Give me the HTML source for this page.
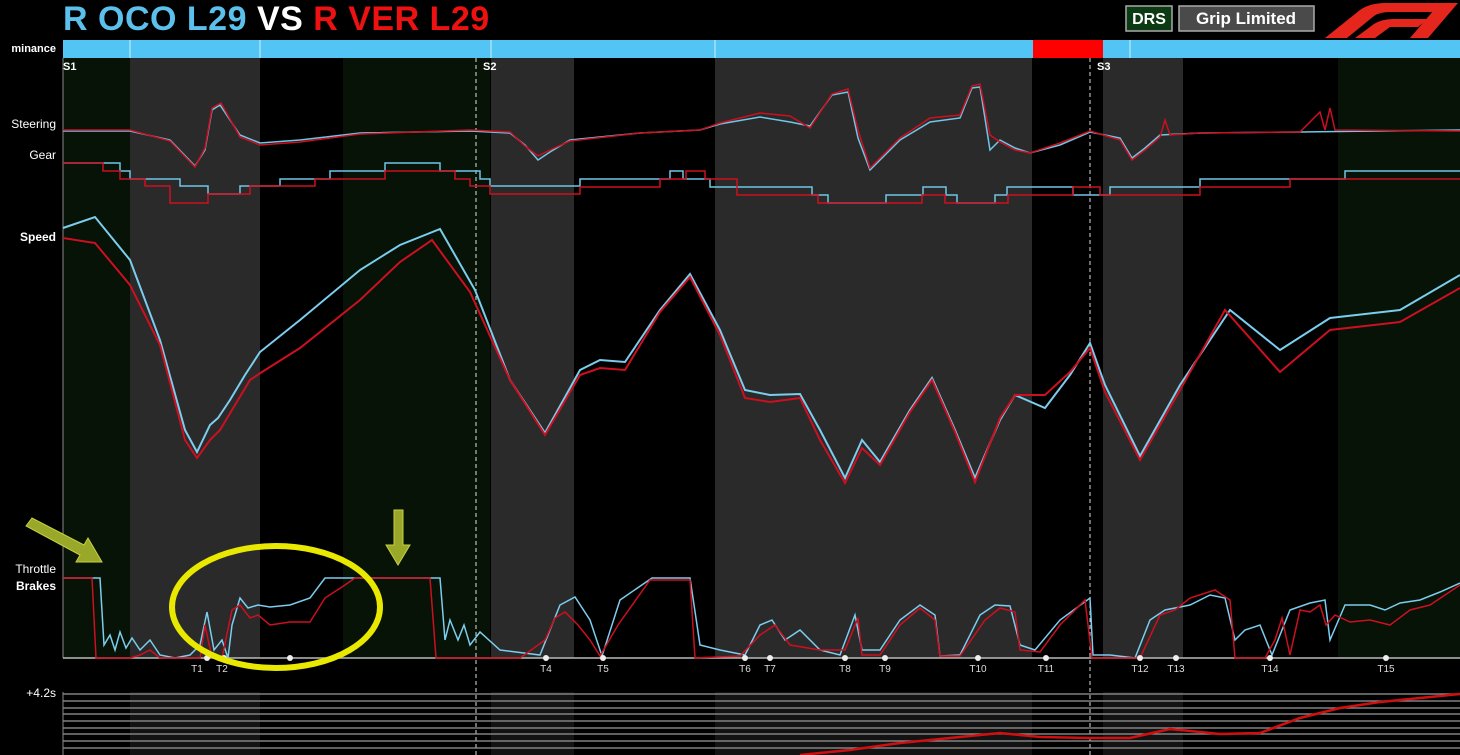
<!DOCTYPE html>
<html><head><meta charset="utf-8"><style>
html,body{margin:0;padding:0;background:#000;}
body{width:1460px;height:755px;overflow:hidden;position:relative;font-family:"Liberation Sans",sans-serif;}
svg{position:absolute;left:0;top:0}
</style></head><body>
<svg width="1460" height="755" viewBox="0 0 1460 755" xmlns="http://www.w3.org/2000/svg">
<rect width="1460" height="755" fill="#000"/>
<g>
<rect x="63" y="58" width="67" height="600" fill="#061306"/>
<rect x="130" y="58" width="130" height="600" fill="#2a2a2a"/>
<rect x="343" y="58" width="147" height="600" fill="#061306"/>
<rect x="491" y="58" width="83" height="600" fill="#2a2a2a"/>
<rect x="715" y="58" width="317" height="600" fill="#2a2a2a"/>
<rect x="1103" y="58" width="80" height="600" fill="#2a2a2a"/>
<rect x="1338" y="58" width="122" height="600" fill="#061306"/>
</g>
<g opacity="0.45">
<rect x="130" y="692" width="130" height="63" fill="#2a2a2a"/>
<rect x="491" y="692" width="83" height="63" fill="#2a2a2a"/>
<rect x="715" y="692" width="317" height="63" fill="#2a2a2a"/>
<rect x="1103" y="692" width="80" height="63" fill="#2a2a2a"/>
</g>
<text x="63" y="30" font-size="34" font-weight="bold" fill="#5bc0eb" letter-spacing="0.5">R OCO L29 <tspan fill="#fff">VS</tspan> <tspan fill="#ee1111">R VER L29</tspan></text>
<rect x="1126" y="6" width="46" height="25" fill="#0c3a12" stroke="#aaa" stroke-width="1.5"/>
<text x="1149" y="24" font-size="16" font-weight="bold" fill="#fff" text-anchor="middle">DRS</text>
<rect x="1179" y="6" width="135" height="25" fill="#4a4a4a" stroke="#aaa" stroke-width="1.5"/>
<text x="1246" y="24" font-size="17" font-weight="bold" fill="#fff" text-anchor="middle">Grip Limited</text>
<g fill="#e5261c">
<path d="M1325 38 L1347 38 L1374 16 Q1380 12 1390 12 L1440 12 L1448 3 L1385 3 Q1370 3 1360 10 Z"/>
<path d="M1355 38 L1375 38 L1390 27 L1418 27 L1428 19 L1393 19 Q1382 19 1374 24 Z"/>
<path d="M1410 38 L1428 38 L1458 3 L1440 3 Z"/>
</g>
<rect x="63" y="40" width="1397" height="18" fill="#52c5f4"/>
<rect x="1033" y="40" width="70" height="18" fill="#ff0000"/>
<g stroke="#cfefff" stroke-width="1"><line x1="130" y1="40" x2="130" y2="58"/><line x1="260" y1="40" x2="260" y2="58"/><line x1="491" y1="40" x2="491" y2="58"/><line x1="715" y1="40" x2="715" y2="58"/><line x1="1130" y1="40" x2="1130" y2="58"/></g>
<text x="56" y="52" font-size="11" font-weight="bold" fill="#fff" text-anchor="end">minance</text>
<g font-size="12" fill="#fff" text-anchor="end">
<text x="56" y="128">Steering</text>
<text x="56" y="159">Gear</text>
<text x="56" y="241" font-weight="bold">Speed</text>
<text x="56" y="573">Throttle</text>
<text x="56" y="590" font-weight="bold">Brakes</text>
<text x="56" y="697">+4.2s</text>
</g>
<g font-size="11" font-weight="bold" fill="#fff"><text x="63" y="70">S1</text><text x="483" y="70">S2</text><text x="1097" y="70">S3</text></g>
<line x1="63" y1="58" x2="63" y2="658" stroke="#888" stroke-width="1"/>
<line x1="63" y1="658" x2="1460" y2="658" stroke="#bbb" stroke-width="1.5"/>
<g stroke="#ddd" stroke-width="1" stroke-dasharray="4,3"><line x1="476" y1="58" x2="476" y2="755"/><line x1="1090" y1="58" x2="1090" y2="755"/></g>
<g stroke="#999" stroke-width="1.2">
<line x1="63" y1="694" x2="1460" y2="694"/><line x1="63" y1="701" x2="1460" y2="701"/><line x1="63" y1="708" x2="1460" y2="708"/><line x1="63" y1="714" x2="1460" y2="714"/><line x1="63" y1="721" x2="1460" y2="721"/><line x1="63" y1="728" x2="1460" y2="728"/><line x1="63" y1="734" x2="1460" y2="734"/><line x1="63" y1="741" x2="1460" y2="741"/><line x1="63" y1="748" x2="1460" y2="748"/>
</g>
<line x1="63" y1="692" x2="63" y2="755" stroke="#888"/>
<polyline fill="none" stroke="#d01010" stroke-width="2.5" points="800,755 850,750 900,743 960,737 1000,733 1040,737 1090,738 1130,738 1170,729 1220,734 1260,733 1300,718 1340,708 1380,702 1420,698 1460,694"/>
<polyline fill="none" stroke="#6fc6e8" stroke-width="1.5" points="63,131 130,131 170,140 195,166 205,150 212,110 220,105 240,135 260,143 300,140 360,133 470,131 510,133 525,145 538,160 550,152 570,140 640,133 700,130 720,124 760,117 790,122 810,126 832,95 848,92 858,138 870,170 900,140 930,122 960,118 972,88 980,87 990,150 1000,140 1015,148 1030,153 1060,145 1090,132 1120,138 1132,158 1145,148 1160,135 1200,133 1300,132 1460,130"/>
<polyline fill="none" stroke="#cc1020" stroke-width="1.5" points="63,130 130,130 170,141 195,167 205,148 212,108 221,103 240,137 260,145 300,142 360,134 470,130 510,132 525,146 538,156 550,150 570,141 640,133 700,130 720,123 760,113 790,116 810,128 832,94 848,89 858,130 870,168 900,138 930,118 960,115 972,86 980,84 990,135 1000,142 1015,150 1030,153 1060,143 1090,131 1120,140 1132,160 1145,150 1160,137 1165,120 1170,135 1200,133 1300,132 1320,112 1325,130 1330,108 1335,130 1460,131"/>
<polyline fill="none" stroke="#6fc6e8" stroke-width="1.5" points="63,163 120,163 120,171 130,171 130,179 180,179 180,186 208,186 208,194 240,194 240,186 280,186 280,179 330,179 330,171 385,171 385,163 440,163 440,171 480,171 480,179 490,179 490,186 580,186 580,179 670,179 670,171 683,171 683,179 710,179 710,187 812,187 812,195 828,195 828,203 886,203 886,195 923,195 923,187 946,187 946,195 957,195 957,203 995,203 995,195 1007,195 1007,187 1073,187 1073,195 1110,195 1110,187 1200,187 1200,179 1345,179 1345,171 1460,171"/>
<polyline fill="none" stroke="#cc1020" stroke-width="1.5" points="63,163 103,163 103,171 120,171 120,179 145,179 145,186 170,186 170,203 208,203 208,194 250,194 250,186 315,186 315,179 385,179 385,171 455,171 455,179 470,179 470,186 490,186 490,194 580,194 580,187 660,187 660,179 686,179 686,171 705,171 705,179 737,179 737,195 818,195 818,203 922,203 922,195 945,195 945,203 1008,203 1008,195 1073,195 1073,187 1100,187 1100,195 1200,195 1200,187 1290,187 1290,179 1460,179"/>
<polyline fill="none" stroke="#7ccdee" stroke-width="2" points="63,228 95,217 130,260 160,340 185,430 197,452 210,425 218,418 230,400 245,375 260,352 300,320 360,270 400,245 440,229 475,290 510,380 545,433 580,370 600,360 625,362 660,310 690,274 720,330 745,390 770,395 800,394 820,430 845,478 862,440 880,462 910,410 932,378 955,430 975,478 1000,420 1015,395 1045,408 1070,375 1090,343 1105,385 1140,456 1180,385 1230,310 1280,350 1330,318 1400,310 1460,275"/>
<polyline fill="none" stroke="#cc1020" stroke-width="2" points="63,238 95,243 130,285 160,345 185,440 197,458 210,440 220,430 232,410 250,380 262,372 300,348 360,300 400,262 432,240 470,292 510,380 545,435 580,375 600,368 625,370 660,312 690,277 720,335 745,398 770,402 800,398 820,440 845,483 862,448 880,465 910,412 932,380 955,432 975,482 1000,418 1015,395 1045,395 1070,372 1090,348 1105,392 1140,460 1180,390 1225,310 1280,372 1330,330 1400,322 1460,288"/>
<polyline fill="none" stroke="#7ccdee" stroke-width="1.5" points="63,578 100,578 104,645 110,635 115,650 120,632 126,648 132,638 140,650 150,640 160,655 175,658 190,655 200,645 207,612 214,650 222,640 228,658 232,625 240,598 248,608 258,605 270,607 290,605 310,598 325,578 440,578 445,640 450,620 458,640 464,625 470,645 480,632 500,650 540,655 560,605 575,597 590,620 602,656 620,600 652,578 690,578 700,645 720,650 745,655 760,625 772,620 785,640 800,630 820,650 840,655 855,615 862,650 880,650 900,620 920,605 935,615 940,656 960,655 980,615 995,605 1010,606 1020,645 1035,650 1060,620 1090,598 1093,655 1110,655 1135,658 1150,620 1165,610 1190,605 1210,595 1225,598 1235,640 1245,630 1260,625 1272,655 1290,610 1310,603 1325,600 1330,640 1345,605 1370,605 1385,610 1400,603 1420,600 1440,592 1460,583"/>
<polyline fill="none" stroke="#cc1020" stroke-width="1.5" points="63,578 92,578 96,658 130,658 140,655 150,650 160,658 200,658 205,625 212,658 222,658 232,610 240,605 250,618 258,615 270,625 290,622 310,622 325,598 345,585 355,578 430,578 436,658 470,658 520,658 545,640 555,618 565,612 578,625 590,640 600,656 618,625 650,580 690,580 695,658 740,656 760,635 775,625 790,645 820,650 845,650 858,618 862,655 880,655 900,625 920,608 935,620 940,656 960,656 985,620 1000,608 1015,612 1020,650 1040,652 1060,625 1085,600 1092,658 1140,658 1160,615 1175,610 1190,598 1215,590 1230,600 1235,658 1265,658 1275,640 1282,618 1290,655 1300,610 1310,612 1320,605 1326,625 1335,615 1350,622 1370,620 1390,625 1410,610 1430,605 1460,585"/>
<g fill="#eee"><circle cx="207" cy="658" r="3"/><circle cx="224" cy="658" r="3"/><circle cx="290" cy="658" r="3"/><circle cx="546" cy="658" r="3"/><circle cx="603" cy="658" r="3"/><circle cx="745" cy="658" r="3"/><circle cx="770" cy="658" r="3"/><circle cx="845" cy="658" r="3"/><circle cx="885" cy="658" r="3"/><circle cx="978" cy="658" r="3"/><circle cx="1046" cy="658" r="3"/><circle cx="1140" cy="658" r="3"/><circle cx="1176" cy="658" r="3"/><circle cx="1270" cy="658" r="3"/><circle cx="1386" cy="658" r="3"/></g>
<g font-size="10" fill="#ddd" text-anchor="middle"><text x="197" y="672">T1</text><text x="222" y="672">T2</text><text x="546" y="672">T4</text><text x="603" y="672">T5</text><text x="745" y="672">T6</text><text x="770" y="672">T7</text><text x="845" y="672">T8</text><text x="885" y="672">T9</text><text x="978" y="672">T10</text><text x="1046" y="672">T11</text><text x="1140" y="672">T12</text><text x="1176" y="672">T13</text><text x="1270" y="672">T14</text><text x="1386" y="672">T15</text></g>
<ellipse cx="276" cy="607" rx="104" ry="61" fill="none" stroke="#e8e800" stroke-width="6"/>
<g fill="#9aa82a" stroke="#c8d040" stroke-width="1">
<polygon points="26,526 32,518 84,545 88,538 102,562 76,562 80,555 "/>
<polygon points="394,510 403,510 403,545 410,545 398,565 386,545 394,545"/>
</g>
</svg>
</body></html>
